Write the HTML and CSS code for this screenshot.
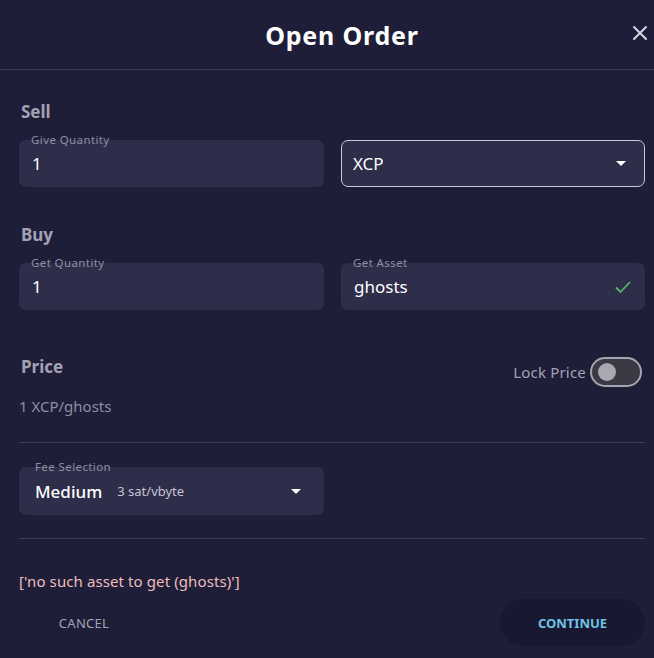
FILE: index.html
```html
<!DOCTYPE html>
<html>
<head>
    <title>Open Order</title>
    <link rel="stylesheet" href="styles.css">
</head>
<body>
    <!-- Dialog header -->
    <div class="header">
        <span></span>
        <h1 class="title">Open Order</h1>
        <button class="close" aria-label="Close">
            <svg width="16" height="16" viewBox="0 0 16 16"><path d="M2 2 L14 14 M14 2 L2 14" stroke="#d6d6e0" stroke-width="2" stroke-linecap="round"/></svg>
        </button>
    </div>

    <div class="content">
        <!-- Sell -->
        <h3 class="section sell">Sell</h3>
        <div class="row">
            <div class="field">
                <span class="field-label">Give Quantity</span>
                <span class="field-value">1</span>
            </div>
            <div class="field select">
                <span class="field-value">XCP</span>
                <span class="caret"></span>
            </div>
        </div>

        <!-- Buy -->
        <h3 class="section buy">Buy</h3>
        <div class="row">
            <div class="field">
                <span class="field-label">Get Quantity</span>
                <span class="field-value">1</span>
            </div>
            <div class="field">
                <span class="field-label">Get Asset</span>
                <span class="field-value">ghosts</span>
                <svg class="check" width="18" height="14" viewBox="0 0 18 14"><path d="M2 7.5 L6.5 12 L16 2" fill="none" stroke="#55b26a" stroke-width="1.8"/></svg>
            </div>
        </div>

        <!-- Price -->
        <div class="price-row">
            <h3 class="section">Price</h3>
            <label class="lock">
                Lock Price
                <span class="toggle"><span class="knob"></span></span>
            </label>
        </div>
        <div class="price-value">1 XCP/ghosts</div>

        <hr class="divider first">

        <!-- Fee -->
        <div class="row">
            <div class="field fee">
                <span class="field-label">Fee Selection</span>
                <span class="fee-name">Medium</span>
                <span class="fee-rate">3 sat/vbyte</span>
                <span class="caret"></span>
            </div>
        </div>

        <hr class="divider second">

        <div class="error">['no such asset to get (ghosts)']</div>

        <div class="actions">
            <button class="btn-cancel">CANCEL</button>
            <button class="btn-continue">CONTINUE</button>
        </div>
    </div>
</body>
</html>
```

FILE: styles.css
```css
/* Global */
body {
    margin: 0;
    background-color: #1f1e39;
    font-family: "Noto Sans", "Open Sans", sans-serif;
    color: #ffffff;
    height: 658px;
    overflow: hidden;
}

button {
    font-family: inherit;
    border: none;
    background: none;
    cursor: pointer;
}

/* Header */
.header {
    display: grid;
    grid-template-columns: 1fr auto 1fr;
    align-items: center;
    height: 69px;
    border-bottom: 1px solid #3a3a50;
}

.title {
    margin: 0;
    padding-left: 30px;
    font-size: 25px;
    font-weight: 700;
    letter-spacing: 0.8px;
}

.close {
    justify-self: end;
    margin-right: 6px;
    margin-top: -4px;
    padding: 0;
    display: flex;
}

/* Body */
.content {
    padding: 0 9px 0 19px;
}

.section {
    margin: 0;
    font-size: 17px;
    line-height: 20px;
    font-weight: 700;
    color: #a3a2b4;
    padding-left: 2px;
}

.sell {
    margin-top: 32px;
    margin-bottom: 18px;
}

.buy {
    margin-top: 38px;
    margin-bottom: 18px;
}

.row {
    display: grid;
    grid-template-columns: 305px 1fr;
    gap: 17px;
}

/* Inputs */
.field {
    position: relative;
    height: 47px;
    box-sizing: border-box;
    background-color: #2e2d4a;
    border-radius: 7px;
    display: flex;
    align-items: center;
    padding: 0 13px 0 13px;
}

.field-label {
    position: absolute;
    top: -7px;
    left: 12px;
    font-size: 11.5px;
    line-height: 14px;
    color: #8e8da3;
    letter-spacing: 0.4px;
}

.field-value {
    font-size: 17px;
    color: #ffffff;
    flex: 1;
}

.select {
    border: 1px solid #c9c8d6;
    padding-left: 11px;
}

.caret {
    width: 0;
    height: 0;
    border-left: 5px solid transparent;
    border-right: 5px solid transparent;
    border-top: 5px solid #ffffff;
    margin-right: 5px;
}

/* Price */
.price-row {
    display: flex;
    justify-content: space-between;
    align-items: flex-start;
    margin-top: 47px;
}

.lock {
    display: flex;
    align-items: center;
    gap: 4px;
    font-size: 15px;
    color: #a3a2b4;
    margin-right: 3px;
    letter-spacing: 0.2px;
}

.toggle {
    width: 52px;
    height: 30px;
    box-sizing: border-box;
    border: 2px solid #a5a4b0;
    border-radius: 15px;
    background-color: #3a3944;
    display: flex;
    align-items: center;
    padding-left: 6px;
}

.knob {
    width: 18px;
    height: 18px;
    border-radius: 50%;
    background-color: #a8a7b2;
}

.price-value {
    margin-top: 9px;
    font-size: 15px;
    line-height: 20px;
    color: #8e8da3;
}

.divider {
    border: none;
    border-top: 1px solid #3a3a50;
    margin: 0;
}

.divider.first {
    margin-top: 26px;
    margin-bottom: 24px;
}

.divider.second {
    margin-top: 23px;
}

/* Fee */
.fee {
    height: 48px;
    padding-left: 16px;
}

.fee .field-label {
    left: 16px;
}

.fee-name {
    font-size: 17px;
    font-weight: 500;
    margin-right: 15px;
}

.fee-rate {
    font-size: 13px;
    color: #c5c4d2;
    flex: 1;
}

.fee .caret {
    margin-right: 10px;
}

/* Footer */
.error {
    margin-top: 32px;
    font-size: 15px;
    line-height: 20px;
    color: #edbcbc;
    letter-spacing: 0.1px;
}

.actions {
    display: flex;
    justify-content: space-between;
    margin-top: 8px;
}

.btn-cancel {
    width: 130px;
    height: 47px;
    font-size: 13px;
    color: #a3a2b4;
    letter-spacing: 0.3px;
}

.btn-continue {
    width: 145px;
    height: 47px;
    border-radius: 24px;
    background-color: #181830;
    color: #6fc3e6;
    font-size: 13px;
    font-weight: 700;
}
```
